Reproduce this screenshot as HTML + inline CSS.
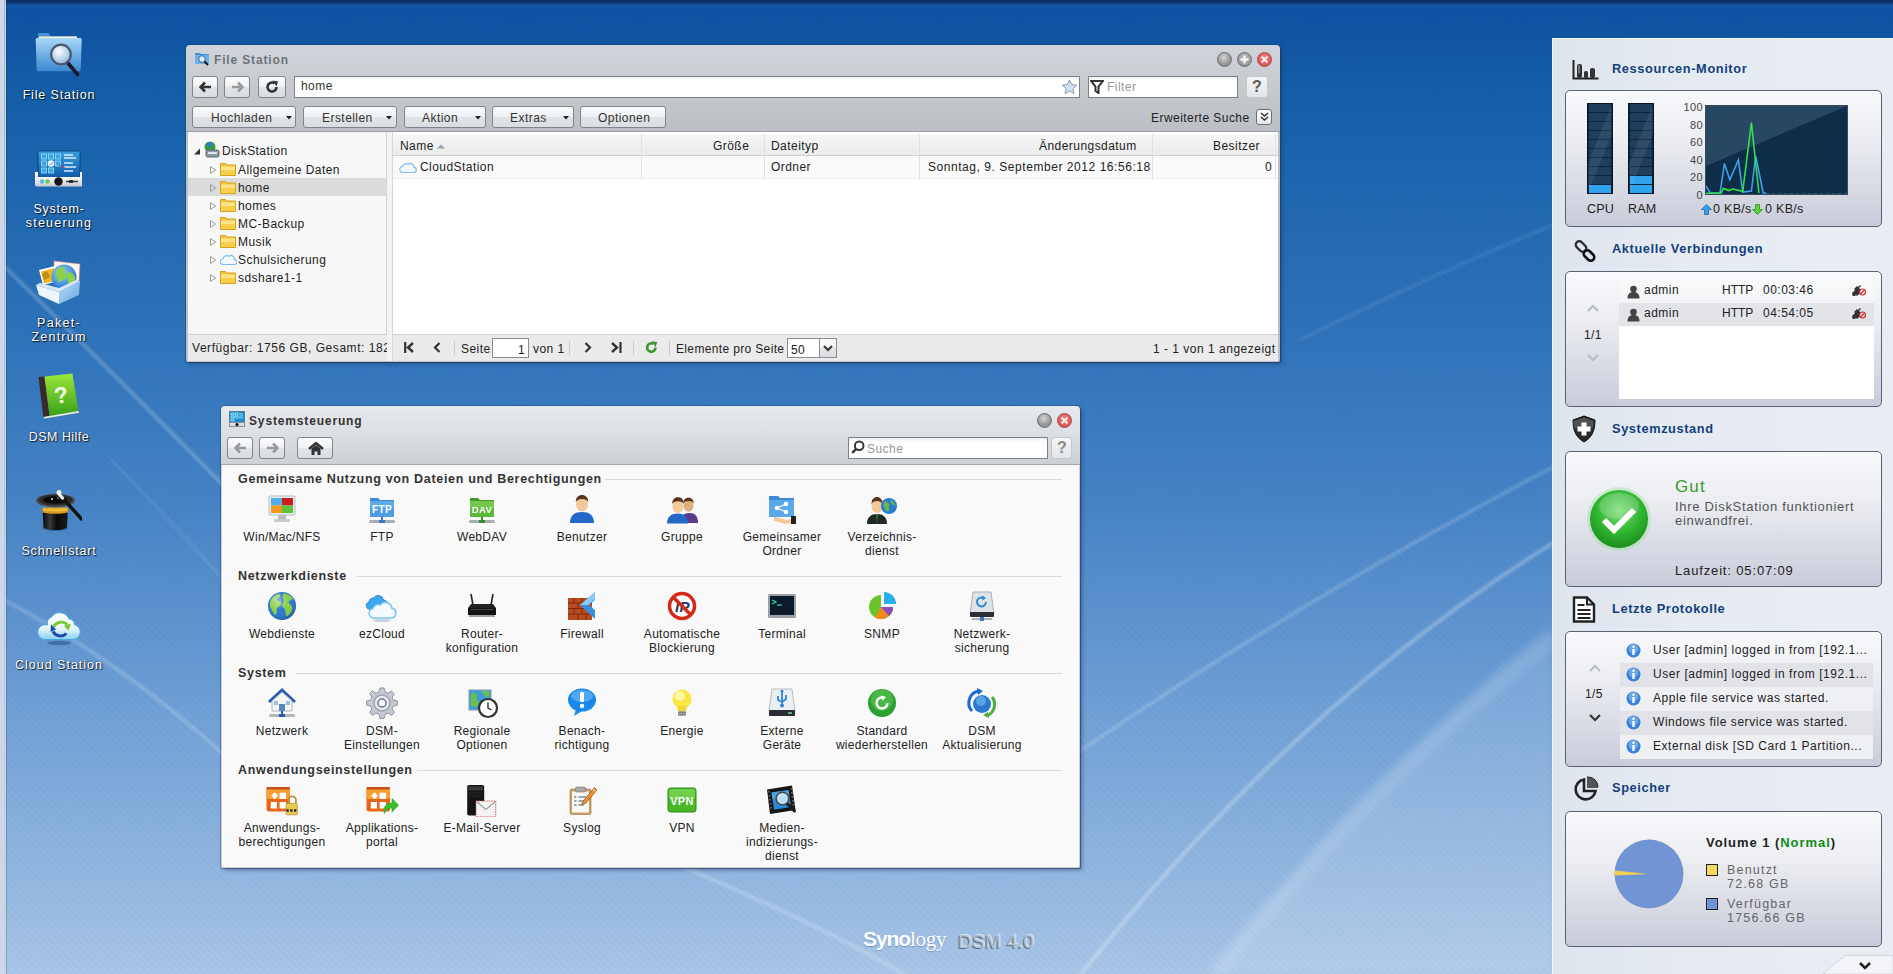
<!DOCTYPE html>
<html><head><meta charset="utf-8">
<style>
*{box-sizing:border-box;margin:0;padding:0}
html,body{width:1893px;height:974px;overflow:hidden}
body{position:relative;font-family:"Liberation Sans",sans-serif;font-size:12px;color:#222;background:#1d5aa8}
.abs{position:absolute}
#bg{position:absolute;left:0;top:0;width:1893px;height:974px}
.dicon{position:absolute;width:110px;left:3px;text-align:center;color:#fff;font-size:13px;letter-spacing:0.35px;line-height:14px;text-shadow:0 1px 2px rgba(0,0,0,.75),0 0 3px rgba(0,0,0,.4)}
.dicon svg{position:absolute;left:31px;top:0}
.dicon .lbl{position:absolute;left:0;width:110px}
/* windows */
.win{position:absolute;background:#cdd1d6;border-radius:4px 4px 2px 2px;box-shadow:0 0 0 1px rgba(30,50,90,.3),1px 1px 1px rgba(30,50,90,.35),2px 2px 4px rgba(30,50,90,.45)}
.ttl{position:absolute;font-weight:bold;font-size:12px;letter-spacing:0.85px}
.btn{position:absolute;border:1px solid #80858b;border-radius:3px;background:linear-gradient(#fdfdfd,#eef0f2 50%,#e2e5e8 51%,#d9dde1)}
.fld{position:absolute;background:linear-gradient(#f1f1f1,#fff 4px);border:1px solid #7d8085}
.t{position:absolute;white-space:nowrap;letter-spacing:0.45px}
.wc{position:absolute;width:16px;height:16px;border-radius:50%}
/* panel */

.box{position:absolute;left:13px;width:317px;border:1px solid #586273;border-radius:5px;background:linear-gradient(#f8f9fb,#eceef2 35%,#c9cbd9)}
.ph{position:absolute;left:60px;font-weight:bold;font-size:12.8px;color:#133f7c;white-space:nowrap}
.pico{position:absolute;left:19px}
/* control panel */
.sec{position:absolute;left:17px;font-weight:bold;font-size:12.5px;color:#333;letter-spacing:0.68px;white-space:nowrap}
.secline{position:absolute;height:1px;background:#dcdcdc}
.ci{position:absolute;width:100px;text-align:center;line-height:14px;font-size:12px;letter-spacing:0.3px;color:#222}
.ci svg{display:block;margin:0 auto 4px auto}
</style></head><body>
<svg id="bg" width="1893" height="974" viewBox="0 0 1893 974">
<defs>
<linearGradient id="bgv" x1="0" y1="0" x2="0" y2="1">
<stop offset="0" stop-color="#082a5c"/>
<stop offset="0.003" stop-color="#0d3a78"/>
<stop offset="0.0055" stop-color="#1458a8"/>
<stop offset="0.01" stop-color="#0f52a2"/>
<stop offset="0.103" stop-color="#1560aa"/>
<stop offset="0.35" stop-color="#2f74bb"/>
<stop offset="0.51" stop-color="#4583c6"/>
<stop offset="0.72" stop-color="#6e9fd6"/>
<stop offset="0.9" stop-color="#93b8e0"/>
<stop offset="1" stop-color="#a9c6e8"/>
</linearGradient>
<pattern id="stripes" width="5" height="5" patternUnits="userSpaceOnUse" patternTransform="rotate(-45)">
<rect width="2" height="5" fill="#000000" opacity="0.025"/>
</pattern>
<filter id="blur4"><feGaussianBlur stdDeviation="4"/></filter>
<filter id="blur2"><feGaussianBlur stdDeviation="1.5"/></filter>
</defs>
<rect width="1893" height="974" fill="url(#bgv)"/>
<rect width="1893" height="974" fill="url(#stripes)"/>
<g fill="none" stroke="#ffffff">
<path d="M0 262 Q110 370 230 492" stroke-width="3" opacity="0.28" filter="url(#blur2)"/>
<path d="M111 460 Q170 520 225 581" stroke-width="2" opacity="0.12" filter="url(#blur2)"/>
<path d="M0 598 Q120 660 230 760" stroke-width="3" opacity="0.25" filter="url(#blur2)"/>
<path d="M680 866 Q800 915 905 974" stroke-width="3" opacity="0.25" filter="url(#blur2)"/>
<path d="M1081 974 Q1300 700 1553 543" stroke-width="3.5" opacity="0.3" filter="url(#blur2)"/>
<path d="M1080 751 Q1300 600 1553 467" stroke-width="3" opacity="0.22" filter="url(#blur2)"/>
<path d="M1300 340 Q1420 280 1553 225" stroke-width="3" opacity="0.1" filter="url(#blur2)"/>
</g>
<path d="M1206 974 Q1380 760 1553 625 V974z" fill="#ffffff" opacity="0.12" filter="url(#blur4)"/>
<path d="M1216 974 Q1385 770 1553 640" fill="none" stroke="#fff" stroke-width="14" opacity="0.1" filter="url(#blur4)"/>

<rect x="0" y="0" width="2" height="974" fill="#c9d8f0"/><rect x="2" y="0" width="2.5" height="974" fill="#d6d5e2"/><rect x="4.5" y="0" width="1.5" height="974" fill="#cdd8e6"/><rect x="6" y="0" width="1" height="974" fill="#000" opacity=".18"/>
</svg>


<div class="win" id="fs" style="left:186px;top:45px;width:1094px;height:317px;background:linear-gradient(#d0d5db,#c9cdd2 30px,#bcc0c5 86px)">
<svg class="abs" style="left:8px;top:5px" width="17" height="17" viewBox="0 0 17 17"><path d="M1 3h5l1 1h8v10H1z" fill="#3d8fd6"/><rect x="1" y="5" width="14" height="9" fill="#6db3ea"/><circle cx="8" cy="9" r="3.3" fill="#dfeefa" stroke="#3a6a9a" stroke-width="1"/><path d="M10.5 11.5l3.5 3.5" stroke="#111" stroke-width="1.8"/></svg>
<div class="ttl" style="left:28px;top:7.5px;color:#6f7378">File Station</div>
<div class="wc" style="left:1030px;top:6px;background:radial-gradient(circle at 45% 35%,#d6d6d6,#9a9a9a 55%,#7f7f7f);border:1px solid #6e6e6e;width:15px;height:15px;margin:0.5px"></div>
<div class="wc" style="left:1050px;top:6px;background:radial-gradient(circle at 50% 40%,#c4c4c4,#9c9c9c 60%,#858585);border:1px solid #6e6e6e;width:15px;height:15px;margin:0.5px"><svg width="13" height="13" style="position:absolute;left:0;top:0"><path d="M6.5 2.5v8M2.5 6.5h8" stroke="#f4f4f4" stroke-width="2.4"/></svg></div>
<div class="wc" style="left:1070px;top:6px;background:radial-gradient(circle at 50% 40%,#ef8e8e,#de5b5b 60%,#c84848);border:1px solid #b04a4a;width:15px;height:15px;margin:0.5px"><svg width="13" height="13" style="position:absolute;left:0;top:0"><path d="M3.5 3.5l6 6M9.5 3.5l-6 6" stroke="#fbe7e7" stroke-width="2.2"/></svg></div>
<!-- row1 -->
<div class="btn" style="left:6px;top:31px;width:26px;height:22px"><svg class="abs" style="left:6px;top:4px" width="13" height="12"><path d="M1 6h11M6 1.5L1.5 6 6 10.5" stroke="#333" stroke-width="2.6" fill="none"/></svg></div>
<div class="btn" style="left:38px;top:31px;width:26px;height:22px"><svg class="abs" style="left:6px;top:4px" width="13" height="12"><path d="M1 6h11M7 1.5L11.5 6 7 10.5" stroke="#999" stroke-width="2.6" fill="none"/></svg></div>
<div class="btn" style="left:72px;top:31px;width:28px;height:22px"><svg class="abs" style="left:6px;top:3px" width="14" height="14"><path d="M11.5 7A4.5 4.5 0 1 1 9.5 3.3" stroke="#333" stroke-width="2.6" fill="none"/><path d="M7.5 0.5L13 1.5 11.5 6.5z" fill="#333"/></svg></div>
<div class="fld" style="left:108px;top:31px;width:786px;height:22px"></div>
<div class="t" style="left:115px;top:34px;color:#333">home</div>
<svg class="abs" style="left:875px;top:34px" width="17" height="16" viewBox="0 0 17 16"><path d="M8.5 1l2.2 4.6 5 .6-3.7 3.4 1 5-4.5-2.5-4.5 2.5 1-5L1.3 6.2l5-.6z" fill="#cfe1f1" stroke="#8a9bb0" stroke-width="1"/></svg>
<div class="fld" style="left:902px;top:31px;width:150px;height:22px"></div>
<svg class="abs" style="left:904px;top:35px" width="14" height="14"><path d="M1 1h12L8.5 6.5V13L5.5 11V6.5z" fill="none" stroke="#333" stroke-width="2"/></svg>
<div class="t" style="left:921px;top:35px;color:#999">Filter</div>
<div class="btn" style="left:1060px;top:31px;width:22px;height:22px;border-color:#c4c7cb;background:linear-gradient(#f4f5f6,#e2e5e8)"><div class="t" style="left:5px;top:1px;font-weight:bold;font-size:16px;color:#5a5a5a">?</div></div>
<!-- row2 -->
<div class="btn" style="left:6px;top:61px;width:104px;height:22px"><div class="t" style="left:18px;top:4px;color:#333">Hochladen</div><svg class="abs" style="left:93px;top:9px" width="6" height="4"><path d="M0 0h6L3 3.5z" fill="#222"/></svg></div>
<div class="btn" style="left:117px;top:61px;width:94px;height:22px"><div class="t" style="left:18px;top:4px;color:#333">Erstellen</div><svg class="abs" style="left:82px;top:9px" width="6" height="4"><path d="M0 0h6L3 3.5z" fill="#222"/></svg></div>
<div class="btn" style="left:218px;top:61px;width:82px;height:22px"><div class="t" style="left:17px;top:4px;color:#333">Aktion</div><svg class="abs" style="left:70px;top:9px" width="6" height="4"><path d="M0 0h6L3 3.5z" fill="#222"/></svg></div>
<div class="btn" style="left:306px;top:61px;width:82px;height:22px"><div class="t" style="left:17px;top:4px;color:#333">Extras</div><svg class="abs" style="left:70px;top:9px" width="6" height="4"><path d="M0 0h6L3 3.5z" fill="#222"/></svg></div>
<div class="btn" style="left:394px;top:61px;width:86px;height:22px"><div class="t" style="left:17px;top:4px;color:#333">Optionen</div></div>
<div class="t" style="left:965px;top:66px;color:#222">Erweiterte Suche</div>
<div class="btn" style="left:1070px;top:64px;width:16px;height:16px;border-color:#6b6f74;background:linear-gradient(#fff,#e4e6e9)"><svg class="abs" style="left:3px;top:2px" width="9" height="10"><path d="M1 1l3.5 3L8 1M1 5l3.5 3L8 5" stroke="#333" stroke-width="1.5" fill="none"/></svg></div>
<div class="abs" style="left:0;top:86px;width:1094px;height:1px;background:#9ea2a7"></div>
<!-- tree -->
<div class="abs" style="left:2px;top:87px;width:199px;height:203px;background:#f7f7f7;border-right:1px solid #d4d4d4"></div>
<div class="abs" style="left:201px;top:87px;width:6px;height:229px;background:#f4f4f4;border-right:1px solid #d8d8d8"></div>
<div class="abs" style="left:2px;top:133px;width:198px;height:18px;background:#dcdcdc"></div>
<svg class="abs" style="left:8px;top:103px" width="7" height="7"><path d="M6 0.5V6.5H0z" fill="#333"/></svg>
<svg class="abs" style="left:17px;top:96px" width="17" height="17" viewBox="0 0 17 17"><circle cx="7" cy="6" r="5.5" fill="#3a9a3a"/><path d="M3 3c2-2 5-2 7 0-1 2-3 2-4 4-1-1-2-2-3-4z" fill="#2a7ac8"/><rect x="3" y="9" width="13" height="7" rx="1.5" fill="#8e98a2" stroke="#5e6870" stroke-width="1"/><rect x="5" y="11" width="9" height="2" fill="#dfe3e7"/></svg>
<div class="t" style="left:36px;top:99px">DiskStation</div>
<svg class="abs" style="left:24px;top:121px" width="6" height="8"><path d="M0.5 0.5L5.5 4 0.5 7.5z" fill="none" stroke="#9a9a9a" stroke-width="1"/></svg>
<svg class="abs" style="left:34px;top:117px" width="16" height="14" viewBox="0 0 16 14"><path d="M0.5 1.5h5l1.5 1.5h8.5v10.5H0.5z" fill="#f3c53b" stroke="#d8a21a" stroke-width="1"/><rect x="1" y="4.5" width="14" height="8.5" fill="#fde38a"/><rect x="1" y="8" width="14" height="5" fill="#f7cf4c"/></svg>
<div class="t" style="left:52px;top:118px">Allgemeine Daten</div>
<svg class="abs" style="left:24px;top:139px" width="6" height="8"><path d="M0.5 0.5L5.5 4 0.5 7.5z" fill="none" stroke="#9a9a9a" stroke-width="1"/></svg>
<svg class="abs" style="left:34px;top:135px" width="16" height="14" viewBox="0 0 16 14"><path d="M0.5 1.5h5l1.5 1.5h8.5v10.5H0.5z" fill="#f3c53b" stroke="#d8a21a" stroke-width="1"/><rect x="1" y="4.5" width="14" height="8.5" fill="#fde38a"/><rect x="1" y="8" width="14" height="5" fill="#f7cf4c"/></svg>
<div class="t" style="left:52px;top:136px">home</div>
<svg class="abs" style="left:24px;top:157px" width="6" height="8"><path d="M0.5 0.5L5.5 4 0.5 7.5z" fill="none" stroke="#9a9a9a" stroke-width="1"/></svg>
<svg class="abs" style="left:34px;top:153px" width="16" height="14" viewBox="0 0 16 14"><path d="M0.5 1.5h5l1.5 1.5h8.5v10.5H0.5z" fill="#f3c53b" stroke="#d8a21a" stroke-width="1"/><rect x="1" y="4.5" width="14" height="8.5" fill="#fde38a"/><rect x="1" y="8" width="14" height="5" fill="#f7cf4c"/></svg>
<div class="t" style="left:52px;top:154px">homes</div>
<svg class="abs" style="left:24px;top:175px" width="6" height="8"><path d="M0.5 0.5L5.5 4 0.5 7.5z" fill="none" stroke="#9a9a9a" stroke-width="1"/></svg>
<svg class="abs" style="left:34px;top:171px" width="16" height="14" viewBox="0 0 16 14"><path d="M0.5 1.5h5l1.5 1.5h8.5v10.5H0.5z" fill="#f3c53b" stroke="#d8a21a" stroke-width="1"/><rect x="1" y="4.5" width="14" height="8.5" fill="#fde38a"/><rect x="1" y="8" width="14" height="5" fill="#f7cf4c"/></svg>
<div class="t" style="left:52px;top:172px">MC-Backup</div>
<svg class="abs" style="left:24px;top:193px" width="6" height="8"><path d="M0.5 0.5L5.5 4 0.5 7.5z" fill="none" stroke="#9a9a9a" stroke-width="1"/></svg>
<svg class="abs" style="left:34px;top:189px" width="16" height="14" viewBox="0 0 16 14"><path d="M0.5 1.5h5l1.5 1.5h8.5v10.5H0.5z" fill="#f3c53b" stroke="#d8a21a" stroke-width="1"/><rect x="1" y="4.5" width="14" height="8.5" fill="#fde38a"/><rect x="1" y="8" width="14" height="5" fill="#f7cf4c"/></svg>
<div class="t" style="left:52px;top:190px">Musik</div>
<svg class="abs" style="left:24px;top:211px" width="6" height="8"><path d="M0.5 0.5L5.5 4 0.5 7.5z" fill="none" stroke="#9a9a9a" stroke-width="1"/></svg>
<svg class="abs" style="left:34px;top:207px" width="17" height="14" viewBox="0 0 17 14"><path d="M3.5 12.5h10.5a2.6 2.6 0 0 0 .4-5.2 3.4 3.4 0 0 0-5.6-3A3.8 3.8 0 0 0 3 6.6a2.9 2.9 0 0 0 .5 5.9z" fill="#f4f9fd" stroke="#7cc0e8" stroke-width="1.2"/></svg>
<div class="t" style="left:52px;top:208px">Schulsicherung</div>
<svg class="abs" style="left:24px;top:229px" width="6" height="8"><path d="M0.5 0.5L5.5 4 0.5 7.5z" fill="none" stroke="#9a9a9a" stroke-width="1"/></svg>
<svg class="abs" style="left:34px;top:225px" width="16" height="14" viewBox="0 0 16 14"><path d="M0.5 1.5h5l1.5 1.5h8.5v10.5H0.5z" fill="#f3c53b" stroke="#d8a21a" stroke-width="1"/><rect x="1" y="4.5" width="14" height="8.5" fill="#fde38a"/><rect x="1" y="8" width="14" height="5" fill="#f7cf4c"/></svg>
<div class="t" style="left:52px;top:226px">sdshare1-1</div>
<!-- grid -->
<div class="abs" style="left:207px;top:87px;width:885px;height:203px;background:#fff"></div>
<div class="abs" style="left:207px;top:89px;width:885px;height:22px;background:linear-gradient(#f7f7f7,#ebebeb);border-bottom:1px solid #d0d0d0"></div>
<div class="t" style="left:214px;top:94px">Name</div>
<svg class="abs" style="left:251px;top:99px" width="8" height="5"><path d="M0 4.5L4 0.5 8 4.5z" fill="#9aa0a6"/></svg>
<div class="t" style="left:527px;top:94px">Größe</div>
<div class="t" style="left:585px;top:94px">Dateityp</div>
<div class="t" style="left:853px;top:94px">Änderungsdatum</div>
<div class="t" style="left:1027px;top:94px">Besitzer</div>
<div class="abs" style="left:207px;top:111px;width:885px;height:23px;background:#fafafa;border-bottom:1px solid #ededed"></div>
<div class="abs" style="left:455px;top:89px;width:1px;height:45px;background:#e2e2e2"></div>
<div class="abs" style="left:578px;top:89px;width:1px;height:45px;background:#e2e2e2"></div>
<div class="abs" style="left:733px;top:89px;width:1px;height:45px;background:#e2e2e2"></div>
<div class="abs" style="left:966px;top:89px;width:1px;height:45px;background:#e2e2e2"></div>
<div class="abs" style="left:1089px;top:89px;width:1px;height:45px;background:#e2e2e2"></div>
<svg class="abs" style="left:213px;top:115px" width="18" height="14" viewBox="0 0 17 14"><path d="M3.5 12.5h10.5a2.6 2.6 0 0 0 .4-5.2 3.4 3.4 0 0 0-5.6-3A3.8 3.8 0 0 0 3 6.6a2.9 2.9 0 0 0 .5 5.9z" fill="#f4f9fd" stroke="#7cc0e8" stroke-width="1.2"/></svg>
<div class="t" style="left:234px;top:115px">CloudStation</div>
<div class="t" style="left:585px;top:115px">Ordner</div>
<div class="t" style="left:742px;top:115px;letter-spacing:0.55px">Sonntag, 9. September 2012 16:56:18</div>
<div class="t" style="left:1079px;top:115px">0</div>
<!-- bottom bar -->
<div class="abs" style="left:2px;top:289px;width:199px;height:27px;background:#ebebeb;border-top:1px solid #cfcfcf;overflow:hidden"><div class="t" style="left:4px;top:6px;letter-spacing:0.55px">Verfügbar: 1756 GB, Gesamt: 1829 GB</div></div>
<div class="abs" style="left:207px;top:289px;width:885px;height:27px;background:#ebebeb;border-top:1px solid #cfcfcf"></div>
<svg class="abs" style="left:218px;top:297px" width="10" height="11"><path d="M1.2 0v11" stroke="#333" stroke-width="2.2"/><path d="M9 1L4 5.5 9 10" stroke="#333" stroke-width="2.4" fill="none"/></svg>
<svg class="abs" style="left:247px;top:297px" width="8" height="11"><path d="M6.5 1L2 5.5 6.5 10" stroke="#333" stroke-width="2.2" fill="none"/></svg>
<div class="abs" style="left:268px;top:296px;width:1px;height:14px;background:#c8c8c8"></div>
<div class="t" style="left:275px;top:297px">Seite</div>
<div class="fld" style="left:306px;top:293px;width:37px;height:20px;border-color:#8c8c8c;background:#fff"><div class="t" style="right:3px;top:4px">1</div></div>
<div class="t" style="left:347px;top:297px">von 1</div>
<div class="abs" style="left:383px;top:296px;width:1px;height:14px;background:#c8c8c8"></div>
<svg class="abs" style="left:398px;top:297px" width="8" height="11"><path d="M1.5 1L6 5.5 1.5 10" stroke="#333" stroke-width="2.2" fill="none"/></svg>
<svg class="abs" style="left:425px;top:297px" width="11" height="11"><path d="M1 1L6 5.5 1 10" stroke="#333" stroke-width="2.4" fill="none"/><path d="M9.5 0v11" stroke="#333" stroke-width="2.2"/></svg>
<div class="abs" style="left:447px;top:296px;width:1px;height:14px;background:#c8c8c8"></div>
<svg class="abs" style="left:459px;top:296px" width="13" height="13"><path d="M10.5 6.5A4.2 4.2 0 1 1 8.6 3" stroke="#3a9a2a" stroke-width="2.6" fill="none"/><path d="M6.8 0.3L12.3 1 10.6 6z" fill="#3a9a2a"/></svg>
<div class="abs" style="left:483px;top:296px;width:1px;height:14px;background:#c8c8c8"></div>
<div class="t" style="left:490px;top:297px;letter-spacing:0.35px">Elemente pro Seite</div>
<div class="fld" style="left:601px;top:293px;width:50px;height:20px;border-color:#8c8c8c;background:#fff"><div class="t" style="left:3px;top:4px">50</div></div>
<div class="btn" style="left:633px;top:293px;width:18px;height:20px;border-color:#8c8c8c;border-radius:0"><svg class="abs" style="left:3px;top:6px" width="10" height="7"><path d="M1 1l4 4 4-4" stroke="#333" stroke-width="2" fill="none"/></svg></div>
<div class="t" style="left:967px;top:297px;letter-spacing:0.5px">1 - 1 von 1 angezeigt</div>
</div>


<div class="win" id="cp" style="left:221px;top:406px;width:859px;height:462px;background:linear-gradient(#e6e9ed,#dde0e4 25px,#cdd1d5 58px)">
<svg width="0" height="0" style="position:absolute"><defs><radialGradient id="glossG" cx=".35" cy=".3" r=".7"><stop offset="0" stop-color="#fff" stop-opacity=".45"/><stop offset=".5" stop-color="#fff" stop-opacity="0"/><stop offset="1" stop-color="#000" stop-opacity=".15"/></radialGradient></defs></svg>
<svg class="abs" style="left:8px;top:5px" width="16" height="16" viewBox="0 0 16 16"><rect x="0.5" y="0.5" width="15" height="11" fill="#1a8ad0" stroke="#5a7a9a"/><path d="M2 2h3v2H2zM6 2h3v2H6zM2 5h3v2H2zM6 5h3v2H6zM2 8h3v2H2zM10 3h4M10 5h4M10 7h4" stroke="#8ae0f8" stroke-width="1" fill="none"/><rect x="0.5" y="11.5" width="15" height="4" fill="#d8dce0" stroke="#8a9298"/><circle cx="8" cy="13.5" r="1.5" fill="#111"/></svg>
<div class="ttl" style="left:28px;top:8px;color:#333">Systemsteuerung</div>
<div class="wc" style="left:815px;top:6px;background:radial-gradient(circle at 45% 35%,#d6d6d6,#9a9a9a 55%,#7f7f7f);border:1px solid #6e6e6e;width:15px;height:15px;margin:0.5px"></div>
<div class="wc" style="left:835px;top:6px;background:radial-gradient(circle at 50% 40%,#ef8e8e,#de5b5b 60%,#c84848);border:1px solid #b04a4a;width:15px;height:15px;margin:0.5px"><svg width="13" height="13" style="position:absolute;left:0;top:0"><path d="M3.5 3.5l6 6M9.5 3.5l-6 6" stroke="#fbe7e7" stroke-width="2.2"/></svg></div>
<div class="btn" style="left:6px;top:31px;width:26px;height:22px"><svg class="abs" style="left:6px;top:4px" width="13" height="12"><path d="M1 6h11M6 1.5L1.5 6 6 10.5" stroke="#999" stroke-width="2.6" fill="none"/></svg></div>
<div class="btn" style="left:38px;top:31px;width:26px;height:22px"><svg class="abs" style="left:6px;top:4px" width="13" height="12"><path d="M1 6h11M7 1.5L11.5 6 7 10.5" stroke="#999" stroke-width="2.6" fill="none"/></svg></div>
<div class="btn" style="left:76px;top:31px;width:36px;height:22px"><svg class="abs" style="left:10px;top:4px" width="16" height="13" viewBox="0 0 16 13"><path d="M1 7L8 1l7 6" stroke="#333" stroke-width="2.4" fill="none"/><path d="M3.5 6.5L8 3l4.5 3.5V13H9.5V9.5h-3V13H3.5z" fill="#333"/></svg></div>
<div class="fld" style="left:627px;top:31px;width:200px;height:22px"></div>
<svg class="abs" style="left:630px;top:34px" width="14" height="15"><circle cx="8.2" cy="5.8" r="4.3" fill="none" stroke="#333" stroke-width="2"/><path d="M5.2 8.8L1.2 12.8" stroke="#333" stroke-width="2.4"/></svg>
<div class="t" style="left:646px;top:36px;color:#999">Suche</div>
<div class="btn" style="left:830px;top:31px;width:21px;height:22px;border-color:#c4c7cb;background:linear-gradient(#f4f5f6,#e2e5e8)"><div class="t" style="left:5px;top:1px;font-weight:bold;font-size:16px;color:#8a8a8a">?</div></div>
<div class="abs" style="left:0;top:58px;width:859px;height:1px;background:#a4a8ad"></div>
<div class="abs" style="left:1px;top:59px;width:857px;height:402px;background:#f9f9f9;border-radius:0 0 2px 2px"></div>

<div class="sec" style="top:66px">Gemeinsame Nutzung von Dateien und Berechtigungen</div>
<div class="secline" style="left:384px;top:73px;width:457px"></div>
<div class="ci" style="left:11px;top:86px"><svg width="34" height="34" viewBox="-1 -1 34 34"><rect x="3" y="3" width="26" height="19" rx="1" fill="#e9ecef" stroke="#b8bec4"/><rect x="5" y="5" width="11" height="7.5" fill="#55aee8"/><rect x="16" y="5" width="11" height="7.5" fill="#c81e1e"/><rect x="5" y="12.5" width="11" height="7.5" fill="#f39a1e"/><rect x="16" y="12.5" width="11" height="7.5" fill="#5cc43c"/><rect x="12" y="22" width="8" height="4" fill="#b8bcc0"/><rect x="8" y="26" width="16" height="3" rx="1" fill="#c8ccd0"/></svg><div>Win/Mac/NFS</div></div>
<div class="ci" style="left:111px;top:86px"><svg width="34" height="34" viewBox="-1 -1 34 34"><path d="M4 5h8l2 2h14v17H4z" fill="#3d8ad6"/><rect x="4" y="8" width="24" height="16" rx="1" fill="#4c9de6"/><rect x="4" y="8" width="24" height="7" fill="#6ab4f0" opacity=".6"/><text x="16" y="20" font-family="Liberation Sans" font-weight="bold" font-size="10" fill="#fff" text-anchor="middle">FTP</text><rect x="15" y="24" width="2" height="4" fill="#3d78c0"/><rect x="3" y="27" width="26" height="3" rx="1.5" fill="#a8adb2"/><rect x="13" y="27" width="6" height="3" fill="#3d78c0"/></svg><div>FTP</div></div>
<div class="ci" style="left:211px;top:86px"><svg width="34" height="34" viewBox="-1 -1 34 34"><path d="M4 5h8l2 2h14v17H4z" fill="#3f9a2a"/><rect x="4" y="8" width="24" height="16" rx="1" fill="#5cb83a"/><rect x="4" y="8" width="24" height="7" fill="#84d05e" opacity=".6"/><text x="16" y="20" font-family="Liberation Sans" font-weight="bold" font-size="9.5" fill="#fff" text-anchor="middle">DAV</text><rect x="15" y="24" width="2" height="4" fill="#3a8a2a"/><rect x="3" y="27" width="26" height="3" rx="1.5" fill="#a8adb2"/><rect x="13" y="27" width="6" height="3" fill="#3a8a2a"/></svg><div>WebDAV</div></div>
<div class="ci" style="left:311px;top:86px"><svg width="34" height="34" viewBox="-1 -1 34 34"><path d="M4 30c0-8 5-11 12-11s12 3 12 11z" fill="#2468c8"/><ellipse cx="16" cy="11" rx="6" ry="7.5" fill="#f2c79a"/><path d="M9.8 9c0-5 3-7 6.2-7s6.2 2 6.2 7c-1-2-3-3-6.2-3S11 7 9.8 9z" fill="#5a3418"/></svg><div>Benutzer</div></div>
<div class="ci" style="left:411px;top:86px"><svg width="34" height="34" viewBox="-1 -1 34 34"><path d="M14 30c0-7 4-10 9.5-10s8.5 3 8.5 10z" fill="#5a3a8a"/><ellipse cx="22.5" cy="12.5" rx="5" ry="6.2" fill="#e0b080"/><path d="M17.3 10.5c0-4.2 2.6-5.8 5.2-5.8s5.2 1.6 5.2 5.8c-1-1.6-2.6-2.4-5.2-2.4s-4.2.8-5.2 2.4z" fill="#5a3418"/><path d="M1 30.5c0-7 4.5-10 10.5-10s10.5 3 10.5 10z" fill="#2468c8"/><ellipse cx="12" cy="13" rx="5.6" ry="7" fill="#f4cb9c"/><path d="M6.2 11c0-4.8 2.9-6.7 5.8-6.7s5.8 1.9 5.8 6.7c-1-1.9-2.8-2.8-5.8-2.8S7.2 9.1 6.2 11z" fill="#5a3418"/></svg><div>Gruppe</div></div>
<div class="ci" style="left:511px;top:86px"><svg width="34" height="34" viewBox="-1 -1 34 34"><path d="M3 3h9l2 2h14v19H3z" fill="#3d8ad6"/><rect x="3" y="7" width="25" height="17" rx="1" fill="#5aa8ea"/><circle cx="11" cy="15" r="2.2" fill="#fff"/><circle cx="20" cy="11" r="2.2" fill="#fff"/><circle cx="20" cy="19" r="2.2" fill="#fff"/><path d="M11 15l9-4M11 15l9 4" stroke="#fff" stroke-width="1.3"/><path d="M8 24c4 0 8 2 12 3l6-1v4l-7 1c-4-1-8-3-11-3z" fill="#f2c79a"/><rect x="25" y="23" width="5" height="8" fill="#222"/></svg><div>Gemeinsamer<br>Ordner</div></div>
<div class="ci" style="left:611px;top:86px"><svg width="34" height="34" viewBox="-1 -1 34 34"><path d="M1 31c0-7 4-10 10-10s10 3 10 10z" fill="#1f2a22"/><path d="M10 21l1 10 1-10z" fill="#3a7a3a"/><ellipse cx="11" cy="13" rx="5.5" ry="7" fill="#f2c79a"/><path d="M5.5 11c0-5 2.7-7 5.5-7s5.5 2 5.5 7c-1-2-2.7-3-5.5-3S6.5 9 5.5 11z" fill="#5a3418"/><circle cx="23" cy="13" r="8" fill="#2a7ad0"/><path d="M18 9c2-1 4 0 5 2s-1 3 0 5-2 3-3 2-1-3-2-4 0-3 0-5zM25 7c2 1 4 3 4 6-1 0-2-1-3-2s-2-2-1-4z" fill="#6ab84a"/></svg><div>Verzeichnis-<br>dienst</div></div>
<div class="sec" style="top:163px">Netzwerkdienste</div>
<div class="secline" style="left:136px;top:170px;width:705px"></div>
<div class="ci" style="left:11px;top:183px"><svg width="34" height="34" viewBox="-1 -1 34 34"><circle cx="16" cy="16" r="14" fill="#2a78d0"/><path d="M4 12c2-5 6-8 10-8 1 2 0 3-2 4s-1 3 1 3 3 2 2 4-3 1-4 3 1 4-1 6-2 0-3-2-2-3-3-5zM17 3.5c4 0 8 2 10 5-1 2-3 1-4 3s2 3 3 5 0 5-2 7-3 4-4 2 0-4-1-6-3-2-3-4 2-3 2-5-2-2-1-4z" fill="#8ad048"/><circle cx="16" cy="16" r="14" fill="url(#glossG)"/></svg><div>Webdienste</div></div>
<div class="ci" style="left:111px;top:183px"><svg width="34" height="34" viewBox="-1 -1 34 34"><ellipse cx="16" cy="30.5" rx="9" ry="1.6" fill="#b8c4d0" opacity=".7"/><path d="M5 19h12a4.5 4.5 0 0 0 .5-9 5.5 5.5 0 0 0-10-2A4.5 4.5 0 0 0 3 12a3.6 3.6 0 0 0 2 7z" fill="#3aa6ee" stroke="#2a86d0" stroke-width="1"/><path d="M9 28h16a5 5 0 0 0 .8-9.9 6.5 6.5 0 0 0-11.6-3.2A5.5 5.5 0 0 0 7 18.5 4.8 4.8 0 0 0 9 28z" fill="#f6fbff" stroke="#7cc6f0" stroke-width="1.6"/></svg><div>ezCloud</div></div>
<div class="ci" style="left:211px;top:183px"><svg width="34" height="34" viewBox="-1 -1 34 34"><path d="M7 15L5 4M25 15l2-11" stroke="#222" stroke-width="1.6"/><path d="M2 18l3-4h22l3 4v7H2z" fill="#222"/><rect x="2" y="18" width="28" height="7" fill="#111"/><rect x="3" y="25" width="26" height="2" fill="#9aa0a6"/><rect x="5" y="19" width="22" height="1" fill="#444"/></svg><div>Router-<br>konfiguration</div></div>
<div class="ci" style="left:311px;top:183px"><svg width="34" height="34" viewBox="-1 -1 34 34"><rect x="2" y="8" width="24" height="22" fill="#b84a20"/><path d="M2 13h24M2 18.5h24M2 24h24M8 8v5M16 8v5M12 13v5.5M20 13v5.5M8 18.5V24M16 18.5V24M12 24v6M20 24v6" stroke="#7a2a10" stroke-width="1"/><path d="M29 2L14 15l15 14V20l-6-5 6-5z" fill="#3a8ee0"/><path d="M29 2L14 15h8l7-6z" fill="#8ac8f8"/></svg><div>Firewall</div></div>
<div class="ci" style="left:411px;top:183px"><svg width="34" height="34" viewBox="-1 -1 34 34"><circle cx="16" cy="16" r="12.5" fill="#fff" stroke="#d42a1a" stroke-width="3.5"/><text x="16.5" y="22" font-family="Liberation Sans" font-weight="bold" font-style="italic" font-size="15" fill="#1a3a6a" text-anchor="middle">IP</text><path d="M7 7l18 18" stroke="#d42a1a" stroke-width="3.5"/></svg><div>Automatische<br>Blockierung</div></div>
<div class="ci" style="left:511px;top:183px"><svg width="34" height="34" viewBox="-1 -1 34 34"><rect x="2" y="4" width="28" height="24" rx="1.5" fill="#9aa0a6"/><rect x="4" y="6" width="24" height="19" fill="#0a1a2a"/><path d="M6 10l4 2-4 2" stroke="#2ae0a0" stroke-width="1.2" fill="none"/><path d="M11 15h5" stroke="#2ae0a0" stroke-width="1.2"/></svg><div>Terminal</div></div>
<div class="ci" style="left:611px;top:183px"><svg width="34" height="34" viewBox="-1 -1 34 34"><path d="M15 5A12 12 0 1 0 27 17H15z" fill="#6ac42a"/><path d="M15 17h12A12 12 0 0 1 9 27.4z" fill="#f08a1a"/><path d="M15 17h12a12 12 0 0 1-4 9z" fill="#8a4ac8"/><path d="M18 2a12 12 0 0 1 12 12H18z" fill="#2ab0e8"/></svg><div>SNMP</div></div>
<div class="ci" style="left:711px;top:183px"><svg width="34" height="34" viewBox="-1 -1 34 34"><path d="M7 2h18l3 22H4z" fill="#dfe3e7" stroke="#aab0b6"/><rect x="4" y="22" width="24" height="5" rx="1" fill="#2a2e32"/><rect x="6" y="28" width="20" height="2" fill="#aab0b6"/><rect x="14" y="27" width="4" height="4" fill="#3a78c0"/><path d="M20 12a4.5 4.5 0 1 1-2-3.8" stroke="#2a88d8" stroke-width="2" fill="none"/><path d="M16 5.5l4 2.5-3.5 2.5z" fill="#2a88d8"/></svg><div>Netzwerk-<br>sicherung</div></div>
<div class="sec" style="top:260px">System</div>
<div class="secline" style="left:74px;top:267px;width:767px"></div>
<div class="ci" style="left:11px;top:280px"><svg width="34" height="34" viewBox="-1 -1 34 34"><path d="M3 15L16 3l13 12" stroke="#2a5ab0" stroke-width="3" fill="none"/><path d="M6 14l10-9 10 9v10H6z" fill="#f4f4f4" stroke="#b0b6bc"/><rect x="13" y="17" width="6" height="7" fill="#5a88b8"/><rect x="8" y="14" width="4" height="4" fill="#9ac0e0"/><rect x="20" y="14" width="4" height="4" fill="#9ac0e0"/><rect x="15" y="24" width="2" height="4" fill="#2a5ab0"/><rect x="3" y="27" width="26" height="3" rx="1.5" fill="#b0b6bc"/><rect x="13" y="27" width="6" height="3" fill="#2a5ab0"/></svg><div>Netzwerk</div></div>
<div class="ci" style="left:111px;top:280px"><svg width="34" height="34" viewBox="-1 -1 34 34"><path d="M14 1h4l1 4 3 1.3 3.5-2.2 2.8 2.8-2.2 3.5L27.4 13l4 1v4l-4 1-1.3 3 2.2 3.5-2.8 2.8-3.5-2.2-3 1.3-1 4h-4l-1-4-3-1.3-3.5 2.2-2.8-2.8 2.2-3.5L4.6 19l-4-1v-4l4-1 1.3-3-2.2-3.5 2.8-2.8L10 6.3 13 5z" fill="#c4cad2" stroke="#8a929c"/><circle cx="16" cy="16" r="8" fill="#e4e8ee" stroke="#9aa2aa" stroke-width="1.5"/><circle cx="16" cy="16" r="4" fill="#fafafa" stroke="#6a7480" stroke-width="1.4"/></svg><div>DSM-<br>Einstellungen</div></div>
<div class="ci" style="left:211px;top:280px"><svg width="34" height="34" viewBox="-1 -1 34 34"><rect x="3" y="3" width="22" height="20" fill="#3a9ae0" stroke="#8aa0b0"/><path d="M5 6c3-1 5 0 6 2s-1 4 1 6 0 5-2 6l-5-1zM15 4h8v6c-2 1-4 0-5-2s-2-2-3-4z" fill="#6ac04a"/><circle cx="22" cy="21" r="9" fill="#fff" stroke="#333" stroke-width="2.2"/><path d="M22 15.5V21l3.5 2" stroke="#333" stroke-width="1.4" fill="none"/></svg><div>Regionale<br>Optionen</div></div>
<div class="ci" style="left:311px;top:280px"><svg width="34" height="34" viewBox="-1 -1 34 34"><ellipse cx="16" cy="13" rx="14" ry="11.5" fill="#1a88e8"/><ellipse cx="16" cy="9" rx="11" ry="6" fill="#7ac4f8" opacity=".55"/><path d="M10 22l-2 7 8-5z" fill="#1a88e8"/><rect x="14" y="5" width="4" height="10" rx="1.5" fill="#fff"/><circle cx="16" cy="19" r="2.2" fill="#fff"/></svg><div>Benach-<br>richtigung</div></div>
<div class="ci" style="left:411px;top:280px"><svg width="34" height="34" viewBox="-1 -1 34 34"><circle cx="16" cy="12" r="9.5" fill="#f8e840"/><circle cx="14" cy="9" r="5" fill="#fffac0" opacity=".8"/><path d="M11 19h10l-1 5h-8z" fill="#f0d830"/><rect x="12" y="24" width="8" height="5" rx="1" fill="#a8a8a0"/><path d="M12 25.5h8M12 27.5h8" stroke="#777" stroke-width=".8"/></svg><div>Energie</div></div>
<div class="ci" style="left:511px;top:280px"><svg width="34" height="34" viewBox="-1 -1 34 34"><path d="M6 2h20l3 22H3z" fill="#eceff2" stroke="#b8bec4"/><rect x="3" y="23" width="26" height="6" rx="1" fill="#2a2e32"/><rect x="22" y="25" width="4" height="2" fill="#6a7" /><path d="M16 5v13M12 9v4l4 2M20 8v4l-4 3" stroke="#2a88d8" stroke-width="1.8" fill="none"/><path d="M14 5h4l-2-3z" fill="#2a88d8"/><circle cx="16" cy="18.5" r="2" fill="#2a88d8"/></svg><div>Externe<br>Geräte</div></div>
<div class="ci" style="left:611px;top:280px"><svg width="34" height="34" viewBox="-1 -1 34 34"><circle cx="16" cy="16" r="14" fill="#2aa030"/><circle cx="16" cy="13" r="11" fill="#6ad05a" opacity=".45"/><path d="M21.5 16a5.5 5.5 0 1 1-3-4.9" stroke="#fff" stroke-width="2.4" fill="none"/><path d="M15 8.5l5 1.5-3.5 4z" fill="#fff"/></svg><div>Standard<br>wiederherstellen</div></div>
<div class="ci" style="left:711px;top:280px"><svg width="34" height="34" viewBox="-1 -1 34 34"><circle cx="16" cy="17" r="9" fill="#2a7ad0"/><circle cx="15" cy="14" r="5" fill="#7ac0f0" opacity=".6"/><path d="M6 24A12 12 0 0 1 13 4" stroke="#1a6ad0" stroke-width="3" fill="none"/><path d="M11 1l6 3-5 4z" fill="#1a6ad0"/><path d="M26 10a12 12 0 0 1-6 19" stroke="#4ab03a" stroke-width="3" fill="none"/><path d="M23 31l-6-3 5-3z" fill="#4ab03a"/></svg><div>DSM<br>Aktualisierung</div></div>
<div class="sec" style="top:357px">Anwendungseinstellungen</div>
<div class="secline" style="left:196px;top:364px;width:645px"></div>
<div class="ci" style="left:11px;top:377px"><svg width="34" height="34" viewBox="-1 -1 34 34"><rect x="0.5" y="3" width="23.5" height="24.5" rx="2.5" fill="#e8661a"/><rect x="0.5" y="3" width="23.5" height="12" rx="2.5" fill="#f6a030"/><rect x="0.5" y="3" width="23.5" height="2.5" rx="1" fill="#c8501a"/><path d="M8.6 8.3l3.5 3.5-3.5 3.5-3.5-3.5z" fill="#fff"/><rect x="13.6" y="8.7" width="6.4" height="6.3" fill="#fff"/><rect x="4.8" y="18" width="6.2" height="6.5" fill="#fff"/><rect x="13.6" y="18" width="6.4" height="6.5" fill="#fff"/><path d="M22.5 19.5v-3.5a3.7 3.7 0 0 1 7.4 0v3.5" stroke="#b89830" stroke-width="1.8" fill="none"/><rect x="20" y="19.4" width="11.4" height="11.5" rx="1.2" fill="#e8c850" stroke="#a8882a" stroke-width=".6"/><path d="M20.5 26.5h10.5" stroke="#222" stroke-width="2.6" stroke-dasharray="2.2 1.6"/></svg><div>Anwendungs-<br>berechtigungen</div></div>
<div class="ci" style="left:111px;top:377px"><svg width="34" height="34" viewBox="-1 -1 34 34"><rect x="0.5" y="3" width="23.5" height="24.5" rx="2.5" fill="#e8661a"/><rect x="0.5" y="3" width="23.5" height="12" rx="2.5" fill="#f6a030"/><rect x="0.5" y="3" width="23.5" height="2.5" rx="1" fill="#c8501a"/><path d="M8.6 8.3l3.5 3.5-3.5 3.5-3.5-3.5z" fill="#fff"/><rect x="13.6" y="8.7" width="6.4" height="6.3" fill="#fff"/><rect x="4.8" y="18" width="6.2" height="6.5" fill="#fff"/><rect x="13.6" y="18" width="6.4" height="6.5" fill="#fff"/><path d="M18.5 29.5c-2-6 1.5-10.5 7.5-10.5v-4.5l6.5 6.8-6.5 6.8v-4.2c-3.5 0-6.3 1.8-7.5 5.6z" fill="#3ac02a" stroke="#2a9a1a" stroke-width=".6"/></svg><div>Applikations-<br>portal</div></div>
<div class="ci" style="left:211px;top:377px"><svg width="34" height="34" viewBox="-1 -1 34 34"><rect x="1.2" y="1" width="17" height="30.5" rx="1.8" fill="#151515"/><rect x="2.5" y="2.5" width="14.5" height="4" fill="#3a3a3a"/><path d="M3 9h13M3 12h13" stroke="#2a2a2a" stroke-width="1"/><rect x="10" y="17" width="19.7" height="15.8" fill="#f4f4f4" stroke="#d06060" stroke-width="1" stroke-dasharray="1.5 1"/><path d="M10.5 17.5l9.4 8 9.4-8" stroke="#a0a0a0" stroke-width="1.2" fill="none"/></svg><div>E-Mail-Server</div></div>
<div class="ci" style="left:311px;top:377px"><svg width="34" height="34" viewBox="-1 -1 34 34"><rect x="4" y="5" width="21" height="25.5" rx="1.5" fill="#c8a060" stroke="#9a7038" stroke-width=".6"/><rect x="6" y="7.5" width="17" height="21" fill="#f8f8f4"/><rect x="9.5" y="3" width="10" height="5" rx="1.2" fill="#a8a8a8" stroke="#777" stroke-width=".6"/><path d="M8 13h2.5M8 17h2.5M8 21h2.5M12.5 13h8M12.5 17h6M12.5 21h5" stroke="#7a8aa0" stroke-width="1.4"/><path d="M28.5 3.5l2.5 2.5-11.5 13.5-3.5 1.2 1.2-3.5z" fill="#f09030" stroke="#8a4a10" stroke-width=".7"/><path d="M27 5l2.5 2.5" stroke="#e8c8a0" stroke-width="1.2"/></svg><div>Syslog</div></div>
<div class="ci" style="left:411px;top:377px"><svg width="34" height="34" viewBox="-1 -1 34 34"><rect x="2" y="4" width="28" height="24" rx="2.5" fill="#4ab828" stroke="#2a8a1a"/><rect x="3" y="5" width="26" height="10" rx="2" fill="#8ae060" opacity=".6"/><text x="16" y="21" font-family="Liberation Sans" font-weight="bold" font-size="11" fill="#fff" text-anchor="middle">VPN</text></svg><div>VPN</div></div>
<div class="ci" style="left:511px;top:377px"><svg width="34" height="34" viewBox="-1 -1 34 34"><path d="M1 5.5L26 1.5l3.5 24.5L4 30z" fill="#151515"/><path d="M5.5 8.5L22.5 6l2.7 17L8 25.7z" fill="#2a8ad4"/><path d="M5.5 8.5L22.5 6l1 6.5L6.5 15z" fill="#6ac0f0" opacity=".5"/><g fill="#6a6a6a"><rect x="2.3" y="7" width="1.6" height="1.6"/><rect x="2.8" y="11" width="1.6" height="1.6"/><rect x="3.3" y="15" width="1.6" height="1.6"/><rect x="3.8" y="19" width="1.6" height="1.6"/><rect x="4.3" y="23" width="1.6" height="1.6"/><rect x="24.5" y="4" width="1.6" height="1.6"/><rect x="25" y="8" width="1.6" height="1.6"/><rect x="25.5" y="12" width="1.6" height="1.6"/><rect x="26" y="16" width="1.6" height="1.6"/><rect x="26.5" y="20" width="1.6" height="1.6"/></g><path d="M21 19.5l7.5 7.5" stroke="#1a1a1a" stroke-width="3" stroke-linecap="round"/><circle cx="16.5" cy="14.5" r="6.3" fill="#d8ecf8" fill-opacity=".85" stroke="#4a4a4a" stroke-width="1.6"/></svg><div>Medien-<br>indizierungs-<br>dienst</div></div>
</div>
<div id="panel" style="position:absolute;left:1552px;top:38px;width:341px;height:936px;background:linear-gradient(90deg,#dfe5ed,#e6ebf2 40%,#e9edf3);overflow:hidden">
<div class="abs" style="left:0;top:0;width:1px;height:936px;background:#f4f7fa"></div>
<div class="abs" style="left:0;top:0;width:341px;height:1px;background:#f4f7fa"></div>
<svg class="pico" style="left:20px;top:21px" width="27" height="21" viewBox="0 0 27 21"><path d="M1.5 1v18.5h25" stroke="#222" stroke-width="2" fill="none"/><rect x="5" y="5" width="5" height="14" rx="2" fill="#333"/><rect x="12" y="12" width="4" height="7" rx="1.5" fill="#333"/><rect x="18" y="9" width="5" height="10" rx="2" fill="#333"/><rect x="6" y="6" width="2" height="8" fill="#777"/></svg>
<div class="ph" style="top:23.2px;letter-spacing:0.6px">Ressourcen-Monitor</div>
<div class="box" style="top:52px;height:137px"></div>
<div class="abs" style="left:35px;top:65px;width:26px;height:91px;background:#0d2238;border:1px solid #0a1626"></div>
<div class="abs" style="left:37px;top:66px;width:22px;height:8px;background:#1f3e5c"></div>
<div class="abs" style="left:37px;top:75px;width:22px;height:8px;background:#1f3e5c"></div>
<div class="abs" style="left:37px;top:84px;width:22px;height:8px;background:#1f3e5c"></div>
<div class="abs" style="left:37px;top:93px;width:22px;height:8px;background:#1f3e5c"></div>
<div class="abs" style="left:37px;top:102px;width:22px;height:8px;background:#1f3e5c"></div>
<div class="abs" style="left:37px;top:111px;width:22px;height:8px;background:#1f3e5c"></div>
<div class="abs" style="left:37px;top:120px;width:22px;height:8px;background:#1f3e5c"></div>
<div class="abs" style="left:37px;top:129px;width:22px;height:8px;background:#1f3e5c"></div>
<div class="abs" style="left:37px;top:138px;width:22px;height:8px;background:#1f3e5c"></div>
<div class="abs" style="left:37px;top:147px;width:22px;height:8px;background:#2fa3ec"></div>
<svg class="abs" style="left:36px;top:66px" width="24" height="89"><path d="M24 0V30L0 89V60z" fill="#fff" opacity="0.07"/></svg>
<div class="abs" style="left:76px;top:65px;width:26px;height:91px;background:#0d2238;border:1px solid #0a1626"></div>
<div class="abs" style="left:78px;top:66px;width:22px;height:8px;background:#1f3e5c"></div>
<div class="abs" style="left:78px;top:75px;width:22px;height:8px;background:#1f3e5c"></div>
<div class="abs" style="left:78px;top:84px;width:22px;height:8px;background:#1f3e5c"></div>
<div class="abs" style="left:78px;top:93px;width:22px;height:8px;background:#1f3e5c"></div>
<div class="abs" style="left:78px;top:102px;width:22px;height:8px;background:#1f3e5c"></div>
<div class="abs" style="left:78px;top:111px;width:22px;height:8px;background:#1f3e5c"></div>
<div class="abs" style="left:78px;top:120px;width:22px;height:8px;background:#1f3e5c"></div>
<div class="abs" style="left:78px;top:129px;width:22px;height:8px;background:#1f3e5c"></div>
<div class="abs" style="left:78px;top:138px;width:22px;height:8px;background:#2fa3ec"></div>
<div class="abs" style="left:78px;top:147px;width:22px;height:8px;background:#2fa3ec"></div>
<svg class="abs" style="left:77px;top:66px" width="24" height="89"><path d="M24 0V30L0 89V60z" fill="#fff" opacity="0.07"/></svg>
<div class="t" style="left:35px;top:164px;font-size:12.5px;letter-spacing:0.2px">CPU</div>
<div class="t" style="left:76px;top:164px;font-size:12.5px;letter-spacing:0.2px">RAM</div>
<div class="abs" style="left:153px;top:67px;width:143px;height:90px;background:#0f2c48;border:1px solid #3a4a5a"></div>
<svg class="abs" style="left:154px;top:68px" width="141" height="88" viewBox="0 0 141 88"><path d="M0 0h141L0 60z" fill="#5a7a95" opacity="0.35"/><polyline points="0,80 4.4,87 14,87 18.4,57.6 23.8,73.7 32.4,53.9 36.7,86 45.4,85 49.7,50 57.2,87 60,87" fill="none" stroke="#3aa2e8" stroke-width="1.6"/><polyline points="0,87.3 15.2,87 17.3,82.4 22.7,84.6 27,83 33.5,84.6 36.7,85.7 45.4,16.7 52.9,87" fill="none" stroke="#32e04a" stroke-width="1.6"/><path d="M60 87.5H141" stroke="#2a8a6a" stroke-width="1" stroke-dasharray="3 3" opacity=".6"/></svg>
<div class="t" style="left:100px;width:51px;text-align:right;top:63.0px;font-size:11px;color:#444;letter-spacing:0.4px">100</div>
<div class="t" style="left:100px;width:51px;text-align:right;top:80.6px;font-size:11px;color:#444;letter-spacing:0.4px">80</div>
<div class="t" style="left:100px;width:51px;text-align:right;top:98.2px;font-size:11px;color:#444;letter-spacing:0.4px">60</div>
<div class="t" style="left:100px;width:51px;text-align:right;top:115.8px;font-size:11px;color:#444;letter-spacing:0.4px">40</div>
<div class="t" style="left:100px;width:51px;text-align:right;top:133.4px;font-size:11px;color:#444;letter-spacing:0.4px">20</div>
<div class="t" style="left:100px;width:51px;text-align:right;top:151.0px;font-size:11px;color:#444;letter-spacing:0.4px">0</div>
<svg class="abs" style="left:149px;top:166px" width="11" height="11"><path d="M5.5 0.5L10.5 5.5H7.5V10.5H3.5V5.5H0.5z" fill="#3a9ee8" stroke="#1a6ab0" stroke-width=".8"/></svg>
<div class="t" style="left:161px;top:164px;font-size:12.5px;letter-spacing:0.3px">0 KB/s</div>
<svg class="abs" style="left:200px;top:166px" width="11" height="11"><path d="M5.5 10.5L10.5 5.5H7.5V0.5H3.5V5.5H0.5z" fill="#5ad040" stroke="#2a9a20" stroke-width=".8"/></svg>
<div class="t" style="left:213px;top:164px;font-size:12.5px;letter-spacing:0.3px">0 KB/s</div>
<svg class="pico" style="left:21px;top:201px" width="25" height="25" viewBox="0 0 25 25"><rect x="2" y="4" width="12" height="7" rx="3.5" transform="rotate(45 8 7.5)" fill="none" stroke="#2a2a2a" stroke-width="2.3"/><rect x="10" y="13" width="12" height="7" rx="3.5" transform="rotate(45 16 16.5)" fill="none" stroke="#111" stroke-width="2.6"/></svg>
<div class="ph" style="top:203.0px;letter-spacing:0.6px">Aktuelle Verbindungen</div>
<div class="box" style="top:233px;height:136px"></div>
<svg class="abs" style="left:35px;top:266px" width="12" height="8"><path d="M1 7l5-5 5 5" stroke="#b8bcc4" stroke-width="2" fill="none"/></svg>
<div class="t" style="left:32px;top:290px;letter-spacing:0.4px">1/1</div>
<svg class="abs" style="left:35px;top:316px" width="12" height="8"><path d="M1 1l5 5 5-5" stroke="#b8bcc4" stroke-width="2" fill="none"/></svg>
<div class="abs" style="left:67px;top:242px;width:255px;height:23px;background:rgba(255,255,255,.25)"></div>
<div class="abs" style="left:67px;top:265px;width:255px;height:23px;background:#e3e4e8"></div>
<div class="abs" style="left:67px;top:288px;width:255px;height:73px;background:#fff"></div>
<svg class="abs" style="left:75px;top:247px" width="13" height="14"><circle cx="6.5" cy="4" r="3.3" fill="#444"/><path d="M0.5 13.5c0-5 2.5-6.5 6-6.5s6 1.5 6 6.5z" fill="#444"/></svg>
<div class="t" style="left:92px;top:245px;letter-spacing:0.5px">admin</div>
<div class="t" style="left:170px;top:245px;letter-spacing:0px">HTTP</div>
<div class="t" style="left:211px;top:245px;letter-spacing:0.5px">00:03:46</div>
<svg class="abs" style="left:298px;top:245px" width="17" height="13"><path d="M2 10l3-3-1-1 3-3 1 1 2-2 1 1-2 2 2 2-2 2 1 1-3 3-1-1-3 3z" fill="#333"/><circle cx="12.5" cy="9" r="3" fill="none" stroke="#d03030" stroke-width="1.2"/><path d="M10.5 11l4-4" stroke="#d03030" stroke-width="1.2"/></svg>
<svg class="abs" style="left:75px;top:270px" width="13" height="14"><circle cx="6.5" cy="4" r="3.3" fill="#444"/><path d="M0.5 13.5c0-5 2.5-6.5 6-6.5s6 1.5 6 6.5z" fill="#444"/></svg>
<div class="t" style="left:92px;top:268px;letter-spacing:0.5px">admin</div>
<div class="t" style="left:170px;top:268px;letter-spacing:0px">HTTP</div>
<div class="t" style="left:211px;top:268px;letter-spacing:0.5px">04:54:05</div>
<svg class="abs" style="left:298px;top:268px" width="17" height="13"><path d="M2 10l3-3-1-1 3-3 1 1 2-2 1 1-2 2 2 2-2 2 1 1-3 3-1-1-3 3z" fill="#333"/><circle cx="12.5" cy="9" r="3" fill="none" stroke="#d03030" stroke-width="1.2"/><path d="M10.5 11l4-4" stroke="#d03030" stroke-width="1.2"/></svg>
<svg class="pico" style="left:19px;top:377px" width="26" height="28" viewBox="0 0 26 28"><path d="M13 1l11 4c0 12-4 18-11 22C6 23 2 17 2 5z" fill="#2a2a2a" stroke="#111"/><path d="M13 2.5l9.5 3.5c0 3-.3 5.5-1 7.5H3.5c-.7-2-1-4.5-1-7.5z" fill="#777" opacity=".5"/><path d="M10.5 7.5h5v4h4v5h-4v4h-5v-4h-4v-5h4z" fill="#fff"/></svg>
<div class="ph" style="top:382.8px;letter-spacing:0.6px">Systemzustand</div>
<div class="box" style="top:413px;height:136px"></div>
<svg class="abs" style="left:32px;top:446px" width="70" height="70" viewBox="0 0 70 70"><defs><radialGradient id="chk" cx=".5" cy=".35" r=".65"><stop offset="0" stop-color="#7ee07a"/><stop offset=".6" stop-color="#2fb42f"/><stop offset="1" stop-color="#1c8e1c"/></radialGradient></defs><circle cx="35" cy="35" r="32" fill="#8ae08a" opacity=".35"/><circle cx="35" cy="35" r="29" fill="url(#chk)"/><ellipse cx="35" cy="22" rx="20" ry="13" fill="#fff" opacity=".18"/><path d="M20 36l10 10 20-20" stroke="#fff" stroke-width="6" fill="none"/></svg>
<div class="t" style="left:123px;top:439px;font-size:17px;color:#3a9a2a;letter-spacing:1.1px">Gut</div>
<div class="t" style="left:123px;top:462px;font-size:13px;color:#555;letter-spacing:0.7px;line-height:14px">Ihre DiskStation funktioniert<br>einwandfrei.</div>
<div class="t" style="left:123px;top:525px;font-size:13px;color:#222;letter-spacing:0.85px">Laufzeit: 05:07:09</div>
<svg class="pico" style="left:20px;top:558px" width="25" height="27" viewBox="0 0 25 27"><path d="M2 1.5h13l7 7v17H2z" fill="#fff" stroke="#222" stroke-width="2.4"/><path d="M15 1.5v7h7" fill="none" stroke="#222" stroke-width="2"/><path d="M5.5 9h7M5.5 14h13M5.5 18h13M5.5 22h13" stroke="#222" stroke-width="2.2"/></svg>
<div class="ph" style="top:562.7px;letter-spacing:0.6px">Letzte Protokolle</div>
<div class="box" style="top:593px;height:136px"></div>
<svg class="abs" style="left:37px;top:626px" width="12" height="8"><path d="M1 7l5-5 5 5" stroke="#b8bcc4" stroke-width="2" fill="none"/></svg>
<div class="t" style="left:33px;top:649px;letter-spacing:0.4px">1/5</div>
<svg class="abs" style="left:37px;top:676px" width="12" height="8"><path d="M1 1l5 5 5-5" stroke="#333" stroke-width="2.2" fill="none"/></svg>
<div class="abs" style="left:68px;top:601px;width:253px;height:24px;background:transparent"></div>
<svg class="abs" style="left:74px;top:605px" width="15" height="15" viewBox="0 0 15 15"><circle cx="7.5" cy="7.5" r="7" fill="#3a82d8"/><circle cx="7.5" cy="5.5" r="5" fill="#9ac8f0" opacity=".5"/><rect x="6.3" y="6" width="2.4" height="6" fill="#fff"/><circle cx="7.5" cy="3.8" r="1.3" fill="#fff"/></svg>
<div class="t" style="left:101px;top:604.5px;letter-spacing:0.55px">User [admin] logged in from [192.1...</div>
<div class="abs" style="left:68px;top:625px;width:253px;height:24px;background:#e2e3e8"></div>
<svg class="abs" style="left:74px;top:629px" width="15" height="15" viewBox="0 0 15 15"><circle cx="7.5" cy="7.5" r="7" fill="#3a82d8"/><circle cx="7.5" cy="5.5" r="5" fill="#9ac8f0" opacity=".5"/><rect x="6.3" y="6" width="2.4" height="6" fill="#fff"/><circle cx="7.5" cy="3.8" r="1.3" fill="#fff"/></svg>
<div class="t" style="left:101px;top:628.5px;letter-spacing:0.55px">User [admin] logged in from [192.1...</div>
<div class="abs" style="left:68px;top:649px;width:253px;height:24px;background:#eff0f4"></div>
<svg class="abs" style="left:74px;top:653px" width="15" height="15" viewBox="0 0 15 15"><circle cx="7.5" cy="7.5" r="7" fill="#3a82d8"/><circle cx="7.5" cy="5.5" r="5" fill="#9ac8f0" opacity=".5"/><rect x="6.3" y="6" width="2.4" height="6" fill="#fff"/><circle cx="7.5" cy="3.8" r="1.3" fill="#fff"/></svg>
<div class="t" style="left:101px;top:652.5px;letter-spacing:0.55px">Apple file service was started.</div>
<div class="abs" style="left:68px;top:673px;width:253px;height:24px;background:#e2e3e8"></div>
<svg class="abs" style="left:74px;top:677px" width="15" height="15" viewBox="0 0 15 15"><circle cx="7.5" cy="7.5" r="7" fill="#3a82d8"/><circle cx="7.5" cy="5.5" r="5" fill="#9ac8f0" opacity=".5"/><rect x="6.3" y="6" width="2.4" height="6" fill="#fff"/><circle cx="7.5" cy="3.8" r="1.3" fill="#fff"/></svg>
<div class="t" style="left:101px;top:676.5px;letter-spacing:0.55px">Windows file service was started.</div>
<div class="abs" style="left:68px;top:697px;width:253px;height:24px;background:#eff0f4"></div>
<svg class="abs" style="left:74px;top:701px" width="15" height="15" viewBox="0 0 15 15"><circle cx="7.5" cy="7.5" r="7" fill="#3a82d8"/><circle cx="7.5" cy="5.5" r="5" fill="#9ac8f0" opacity=".5"/><rect x="6.3" y="6" width="2.4" height="6" fill="#fff"/><circle cx="7.5" cy="3.8" r="1.3" fill="#fff"/></svg>
<div class="t" style="left:101px;top:700.5px;letter-spacing:0.55px">External disk [SD Card 1 Partition...</div>
<svg class="pico" style="left:20px;top:738px" width="27" height="27" viewBox="0 0 27 27"><path d="M12 3.5A10 10 0 1 0 23.5 15H12z" fill="none" stroke="#222" stroke-width="2.6"/><path d="M15 1h1a10 10 0 0 1 10 10v1H15z" fill="#555"/><path d="M15 1h1a10 10 0 0 1 10 10" fill="none" stroke="#222" stroke-width="1"/></svg>
<div class="ph" style="top:742.2px;letter-spacing:0.6px">Speicher</div>
<div class="box" style="top:773px;height:136px"></div>
<svg class="abs" style="left:59px;top:798px" width="76" height="76" viewBox="0 0 76 76"><circle cx="38" cy="38" r="35.5" fill="#fbefc0" opacity=".35"/><circle cx="38" cy="38" r="34.5" fill="#7094d4"/><path d="M38 38L3.6 34.5A34.5 34.5 0 0 0 3.5 39.5z" fill="#f0d050"/></svg>
<div class="t" style="left:154px;top:797px;font-size:13px;font-weight:bold;color:#222;letter-spacing:0.95px">Volume 1 (<span style="color:#148a14">Normal</span>)</div>
<div class="abs" style="left:154px;top:826px;width:12px;height:12px;background:#f4d860;border:1.5px solid #222"></div>
<div class="t" style="left:175px;top:825px;font-size:12.5px;color:#666;letter-spacing:1.2px;line-height:14px">Benutzt<br>72.68 GB</div>
<div class="abs" style="left:154px;top:860px;width:12px;height:12px;background:#7094d4;border:1.5px solid #222"></div>
<div class="t" style="left:175px;top:859px;font-size:12.5px;color:#666;letter-spacing:1.2px;line-height:14px">Verfügbar<br>1756.66 GB</div>
<svg class="abs" style="left:260px;top:912px" width="81" height="24"><path d="M11 24L33 5.5H81V24z" fill="#f3f4f7" stroke="#d4d8de"/><path d="M48 13l5 5 5-5" stroke="#222" stroke-width="2.6" fill="none"/></svg>
</div>
<svg class="abs" style="left:34px;top:30px" width="48" height="48" viewBox="0 0 48 48"><defs><linearGradient id="dfsg" x1="0" y1="0" x2="0" y2="1"><stop offset="0" stop-color="#a8d8f8"/><stop offset="1" stop-color="#3a88d0"/></linearGradient><radialGradient id="dfsl" cx=".4" cy=".35" r=".7"><stop offset="0" stop-color="#ffffff"/><stop offset="1" stop-color="#8ab4da"/></radialGradient></defs>
<path d="M4 4.5c0-1 .5-1.5 1.5-1.5h9l2 3h25c1 0 1.5.5 1.5 1.5V14H4z" fill="#4a90d0"/><rect x="5" y="6.5" width="38" height="5" fill="#f8f0d8"/>
<path d="M1.7 9.5c0-1 .5-1.5 1.5-1.5h43c1 0 1.5.5 1.5 1.5l-1 30c0 1-.6 1.8-1.8 1.8H4.5c-1.2 0-1.8-.8-1.8-1.8z" fill="url(#dfsg)"/>
<path d="M33.5 32.5l10 12" stroke="#1a1a2a" stroke-width="3.6" stroke-linecap="round"/><circle cx="27" cy="24.5" r="9.8" fill="url(#dfsl)" stroke="#4a5870" stroke-width="2.2"/></svg>
<div class="t" style="left:4px;width:110px;text-align:center;top:87.7px;color:#fff;font-size:12.5px;line-height:14px;text-shadow:1px 1px 1px rgba(0,0,0,.8),0 0 2px rgba(0,20,60,.6)"><div style="letter-spacing:0.85px">File Station</div></div>
<svg class="abs" style="left:34px;top:144px" width="48" height="48" viewBox="0 0 48 48"><defs><linearGradient id="cpsg" x1="0" y1="0" x2="0" y2="1"><stop offset="0" stop-color="#3a9ee0"/><stop offset="1" stop-color="#0e5aa8"/></linearGradient><linearGradient id="cpbg" x1="0" y1="0" x2="0" y2="1"><stop offset="0" stop-color="#fafbfc"/><stop offset="1" stop-color="#c8ccd2"/></linearGradient></defs>
<rect x="4" y="7" width="42" height="27" rx="1" fill="url(#cpsg)" stroke="#0a3a70" stroke-width=".8"/>
<g fill="#3aa8e0" stroke="#8ad8f8" stroke-width=".9"><rect x="7.5" y="10" width="5" height="5"/><rect x="14.5" y="10" width="5" height="5"/><rect x="21.5" y="10" width="5" height="5"/><rect x="7.5" y="17" width="5" height="5"/><rect x="21.5" y="17" width="5" height="5"/><rect x="7.5" y="24" width="5" height="5"/><rect x="14.5" y="24" width="5" height="5"/></g>
<circle cx="17" cy="19.5" r="3.3" fill="#f0f8fc"/><path d="M15.3 19.5l1.3 1.4 2.4-2.6" stroke="#2a8ad0" stroke-width="1" fill="none"/>
<path d="M30 11h9M30 14h12M30 19h9M30 23h12M30 27h9" stroke="#d8eef8" stroke-width="1.3"/><path d="M25 21l6 3" stroke="#c04050" stroke-width="1"/>
<path d="M1 28h3v5h42v-5h3v12.5a2 2 0 0 1-2 2H3a2 2 0 0 1-2-2z" fill="url(#cpbg)"/><rect x="1" y="33" width="48" height="9" rx="2" fill="url(#cpbg)"/>
<circle cx="8" cy="37.5" r="2.2" fill="#5ab8f0"/><circle cx="13.5" cy="37.5" r="2.2" fill="#6ac84a"/><circle cx="24.5" cy="37.5" r="4.2" fill="#111"/><path d="M32 37.5h12" stroke="#444" stroke-width="1.6"/><rect x="35" y="36.3" width="4" height="2.4" fill="#111"/></svg>
<div class="t" style="left:4px;width:110px;text-align:center;top:201.7px;color:#fff;font-size:12.5px;line-height:14px;text-shadow:1px 1px 1px rgba(0,0,0,.8),0 0 2px rgba(0,20,60,.6)"><div style="letter-spacing:0.75px">System-</div><div style="letter-spacing:1.2px">steuerung</div></div>
<svg class="abs" style="left:34px;top:258px" width="48" height="48" viewBox="0 0 48 48"><defs><linearGradient id="pkgr" x1="0" y1="0" x2="1" y2="1"><stop offset="0" stop-color="#b8dcf8"/><stop offset="1" stop-color="#6aa6e0"/></linearGradient><radialGradient id="pkgg" cx=".4" cy=".35" r=".7"><stop offset="0" stop-color="#9ad8ff"/><stop offset="1" stop-color="#1a6ac8"/></radialGradient></defs>
<path d="M20 3l26 3-1 17-25-3z" fill="#fbf6f0" stroke="#e07878" stroke-width="1" stroke-dasharray="1.6 1.2"/>
<path d="M5 12l16-4 3 15-15 4z" fill="#fff"/><path d="M7 13.5l13-3.2 2.3 12.2-12.3 3z" fill="#f2b41a"/><path d="M8 16l5-3 3 6-6 3z" fill="#7a5a10" opacity=".45"/>
<circle cx="30" cy="19" r="12.5" fill="url(#pkgg)"/><path d="M24 10c3-2 6-1 7 1s-1 4 1 6-1 5-3 5-2 3-4 2-2-4-3-6 0-5 2-8zM34 14c3 0 6 2 7 5s-1 6-3 6-3 2-4 0 0-4-1-6 0-4 1-5z" fill="#8ad04a"/>
<path d="M2 27l23 7v12L5 37z" fill="#eef5fc"/><path d="M25 34l21-11-1 14-20 9z" fill="url(#pkgr)"/><path d="M2 27l23 7 21-11-4-1-17 8-19-5z" fill="#d6e8f8"/></svg>
<div class="t" style="left:4px;width:110px;text-align:center;top:315.7px;color:#fff;font-size:12.5px;line-height:14px;text-shadow:1px 1px 1px rgba(0,0,0,.8),0 0 2px rgba(0,20,60,.6)"><div style="letter-spacing:1.29px">Paket-</div><div style="letter-spacing:1.22px">Zentrum</div></div>
<svg class="abs" style="left:34px;top:372px" width="48" height="48" viewBox="0 0 48 48"><defs><linearGradient id="hlpg" x1="0" y1="0" x2="0" y2="1"><stop offset="0" stop-color="#9ae83a"/><stop offset="1" stop-color="#3aa01a"/></linearGradient></defs>
<path d="M4.5 5l6-.6 5 39.5-6.2 1.2z" fill="#3a2a28"/><path d="M10.5 4.4L38.4 1.4 44.5 39 15.6 43.9z" fill="url(#hlpg)"/><path d="M9.4 45.1L44.5 39l.6 1.8-34.5 5.6z" fill="#e8ecd8"/>
<text x="27" y="31" font-family="Liberation Sans" font-weight="bold" font-size="23" fill="#f4fae8" text-anchor="middle" transform="rotate(-8 27 22)">?</text></svg>
<div class="t" style="left:4px;width:110px;text-align:center;top:429.7px;color:#fff;font-size:12.5px;line-height:14px;text-shadow:1px 1px 1px rgba(0,0,0,.8),0 0 2px rgba(0,20,60,.6)"><div style="letter-spacing:0.46px">DSM Hilfe</div></div>
<svg class="abs" style="left:34px;top:486px" width="48" height="48" viewBox="0 0 48 48"><defs><linearGradient id="hatc" x1="0" y1="0" x2="1" y2="0"><stop offset="0" stop-color="#050505"/><stop offset=".3" stop-color="#3a3a3a"/><stop offset=".55" stop-color="#0a0a0a"/><stop offset="1" stop-color="#1a1a1a"/></linearGradient></defs>
<ellipse cx="21" cy="42" rx="13" ry="3" fill="#0a2a5a" opacity=".35"/>
<path d="M8.5 22h25.5l-1 19c-2 2.5-7 3-11.5 3s-10-.5-12-3z" fill="url(#hatc)"/>
<path d="M8.5 21.5h25.5v5c-4 1-8 1.3-12.7 1.3S12 27.5 8.5 26.5z" fill="#d89a18"/><path d="M8.5 22.5h25.5v1.8c-4 1-8 1.3-12.7 1.3S12 25.3 8.5 24.3z" fill="#f8c848" opacity=".7"/>
<ellipse cx="21.5" cy="14.5" rx="19.5" ry="6.8" fill="#4a4a4a"/><ellipse cx="21.5" cy="14" rx="17" ry="5.5" fill="#2a2a2a"/><ellipse cx="21" cy="14" rx="12" ry="3.8" fill="#0a0a0a"/>
<circle cx="18" cy="13" r="1" fill="#ddd"/><circle cx="24" cy="12" r=".8" fill="#ccc"/>
<path d="M25 8l22.5 25" stroke="#111" stroke-width="3.4" stroke-linecap="round"/><path d="M25 8l3.5 4" stroke="#f0f0f8" stroke-width="3.4" stroke-linecap="round"/><circle cx="25" cy="6.5" r="2.5" fill="#fff" opacity=".85"/></svg>
<div class="t" style="left:4px;width:110px;text-align:center;top:543.7px;color:#fff;font-size:12.5px;line-height:14px;text-shadow:1px 1px 1px rgba(0,0,0,.8),0 0 2px rgba(0,20,60,.6)"><div style="letter-spacing:0.82px">Schnellstart</div></div>
<svg class="abs" style="left:34px;top:600px" width="48" height="48" viewBox="0 0 48 48"><defs><linearGradient id="cldg" x1="0" y1="0" x2="0" y2="1"><stop offset="0" stop-color="#ffffff"/><stop offset=".6" stop-color="#e4f4fc"/><stop offset="1" stop-color="#8ad0f4"/></linearGradient></defs>
<ellipse cx="25" cy="43" rx="12" ry="2.2" fill="#0a2a5a" opacity=".35"/>
<path d="M9 39.5h30a7.5 7.5 0 0 0 1.5-14.8 6 6 0 0 0-5.5-5.7A10 10 0 0 0 17.5 17a7 7 0 0 0-4 8A7.3 7.3 0 0 0 9 39.5z" fill="url(#cldg)" stroke="#4aa8e0" stroke-width="1"/>
<path d="M19.5 27a8.5 8.5 0 0 1 14-2" stroke="#7ac830" stroke-width="2.8" fill="none"/><path d="M37 23.5l-2.5 7-4.5-4.5z" fill="#7ac830"/>
<path d="M32.5 33.5a8.5 8.5 0 0 1-13.5-2" stroke="#1a4aa8" stroke-width="2.8" fill="none"/><path d="M17 24.5l-.5 7.5 5.5-2.5z" fill="#1a4aa8"/></svg>
<div class="t" style="left:4px;width:110px;text-align:center;top:657.7px;color:#fff;font-size:12.5px;line-height:14px;text-shadow:1px 1px 1px rgba(0,0,0,.8),0 0 2px rgba(0,20,60,.6)"><div style="letter-spacing:1.0px">Cloud Station</div></div>
<div class="abs" style="left:863px;top:927px;white-space:nowrap;font-size:21px;color:#fff;text-shadow:0 1px 1px rgba(40,70,120,.35)"><span style="font-weight:bold;letter-spacing:-1.1px">Syno</span><span style="font-family:'Liberation Serif',serif;letter-spacing:-0.3px">logy</span></div>
<div class="abs" style="left:958px;top:931px;white-space:nowrap;font-size:19px;color:#b4bec8;letter-spacing:0.3px;text-shadow:-1px 1px 0 rgba(70,80,95,.75),1px -1px 0 rgba(255,255,255,.6)">DSM 4.0</div>
</body></html>
